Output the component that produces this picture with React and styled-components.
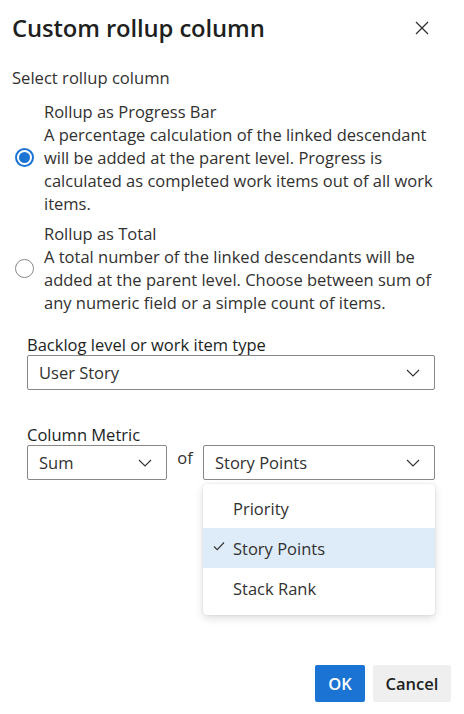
import React from "react";
import styled, { createGlobalStyle } from "styled-components";

const Global = createGlobalStyle`
  html, body { margin: 0; padding: 0; background: #fff; }
  body { font-family: "Open Sans", "Noto Sans", sans-serif; color: #323130; }
`;

const Dialog = styled.div`
  width: 464px;
  height: 714px;
  box-sizing: border-box;
  padding: 10px 13px 12px 12px;
  display: flex;
  flex-direction: column;
  position: relative;
`;

const Header = styled.div`
  display: flex;
  align-items: center;
  justify-content: space-between;
  height: 36px;
`;

const Title = styled.h1`
  margin: 0;
  font-size: 23.8px;
  font-weight: 600;
  color: #201f1e;
  letter-spacing: -0.1px;
`;

const Close = styled.button`
  border: 0;
  background: transparent;
  width: 32px;
  height: 32px;
  display: flex;
  align-items: center;
  justify-content: center;
  padding: 0;
  margin-right: 13px;
  color: #323130;
`;

const SectionLabel = styled.div`
  margin-top: 20px;
  font-size: 16.6px;
  line-height: 23px;
`;

const RadioRow = styled.label`
  display: flex;
  align-items: center;
  gap: 10px;
  margin-top: ${(p) => p.$mt}px;
  padding-left: 3px;
`;

const RadioCircle = styled.span`
  flex: none;
  width: 19px;
  height: 19px;
  border-radius: 50%;
  box-sizing: border-box;
  border: ${(p) => (p.$checked ? "2px solid #1b74d4" : "1px solid #8a8886")};
  display: flex;
  align-items: center;
  justify-content: center;
  &::after {
    content: "";
    display: ${(p) => (p.$checked ? "block" : "none")};
    width: 11px;
    height: 11px;
    border-radius: 50%;
    background: #1b74d4;
  }
`;

const RadioText = styled.div`
  font-size: 16.5px;
  line-height: 23px;
  color: #323130;
`;

const Field = styled.div`
  margin-top: ${(p) => p.$mt}px;
  padding-left: 15px;
  display: flex;
  flex-direction: column;
`;

const FieldLabel = styled.div`
  font-size: 16.5px;
  line-height: 21px;
  color: #201f1e;
`;

const Row = styled.div`
  display: flex;
  align-items: flex-start;
  position: relative;
`;

const Select = styled.div`
  box-sizing: border-box;
  width: ${(p) => p.$w}px;
  height: 35px;
  border: 1px solid #8a8886;
  border-radius: 2px;
  display: flex;
  align-items: center;
  justify-content: space-between;
  padding: 0 14px 0 11px;
  font-size: 16.5px;
  color: #323130;
  background: #fff;
`;

const Of = styled.span`
  font-size: 16.5px;
  width: 36px;
  text-align: center;
  line-height: 26px;
  color: #323130;
`;

const Menu = styled.div`
  position: absolute;
  left: 176px;
  top: 39px;
  width: 232px;
  padding: 4px 0 7px;
  background: #fff;
  border-radius: 4px;
  box-shadow: 0 3px 8px rgba(0, 0, 0, 0.14), 0 0 2px rgba(0, 0, 0, 0.12);
  z-index: 2;
`;

const Item = styled.div`
  height: 40px;
  display: flex;
  align-items: center;
  padding-left: 30px;
  position: relative;
  font-size: 16.5px;
  color: #323130;
  background: ${(p) => (p.$sel ? "#deecf9" : "transparent")};
`;

const Check = styled.span`
  position: absolute;
  left: 10px;
  top: 13px;
  display: flex;
`;

const Footer = styled.div`
  margin-top: auto;
  display: flex;
  justify-content: flex-end;
  gap: 8px;
`;

const Button = styled.button`
  height: 37px;
  border: 0;
  border-radius: 2px;
  font-family: inherit;
  font-size: 16.5px;
  font-weight: 600;
  padding: 0 12px;
  background: ${(p) => (p.$primary ? "#1b74d4" : "#efefef")};
  color: ${(p) => (p.$primary ? "#fff" : "#201f1e")};
  min-width: ${(p) => (p.$primary ? 50 : 78)}px;
`;

const Chevron = () => (
  <svg width="14" height="8" viewBox="0 0 14 8" fill="none">
    <path d="M1 1l6 6 6-6" stroke="#323130" strokeWidth="1.1" />
  </svg>
);

export default function App() {
  return (
    <>
      <Global />
      <Dialog>
        <Header>
          <Title>Custom rollup column</Title>
          <Close aria-label="Close">
            <svg width="14" height="14" viewBox="0 0 14 14" fill="none">
              <path d="M1 1l12 12M13 1L1 13" stroke="#323130" strokeWidth="1.3" />
            </svg>
          </Close>
        </Header>
        <SectionLabel>Select rollup column</SectionLabel>
        <RadioRow $mt={11}>
          <RadioCircle $checked />
          <RadioText>
            Rollup as Progress Bar
            <br />A percentage calculation of the linked descendant will be added at the parent level. Progress is calculated as completed work items out of all work items.
          </RadioText>
        </RadioRow>
        <RadioRow $mt={7}>
          <RadioCircle />
          <RadioText>
            Rollup as Total
            <br />A total number of the linked descendants will be added at the parent level. Choose between sum of any numeric field or a simple count of items.
          </RadioText>
        </RadioRow>
        <Field $mt={20}>
          <FieldLabel>Backlog level or work item type</FieldLabel>
          <Select $w={408}>
            User Story
            <Chevron />
          </Select>
        </Field>
        <Field $mt={34}>
          <FieldLabel>Column Metric</FieldLabel>
          <Row>
            <Select $w={140}>
              Sum
              <Chevron />
            </Select>
            <Of>of</Of>
            <Select $w={232}>
              Story Points
              <Chevron />
            </Select>
            <Menu>
              <Item>Priority</Item>
              <Item $sel>
                <Check>
                  <svg width="12" height="10" viewBox="0 0 12 10" fill="none">
                    <path d="M1 5.5l3.2 3.2L11 1.5" stroke="#323130" strokeWidth="1.1" />
                  </svg>
                </Check>
                Story Points
              </Item>
              <Item>Stack Rank</Item>
            </Menu>
          </Row>
        </Field>
        <Footer>
          <Button $primary>OK</Button>
          <Button>Cancel</Button>
        </Footer>
      </Dialog>
    </>
  );
}
